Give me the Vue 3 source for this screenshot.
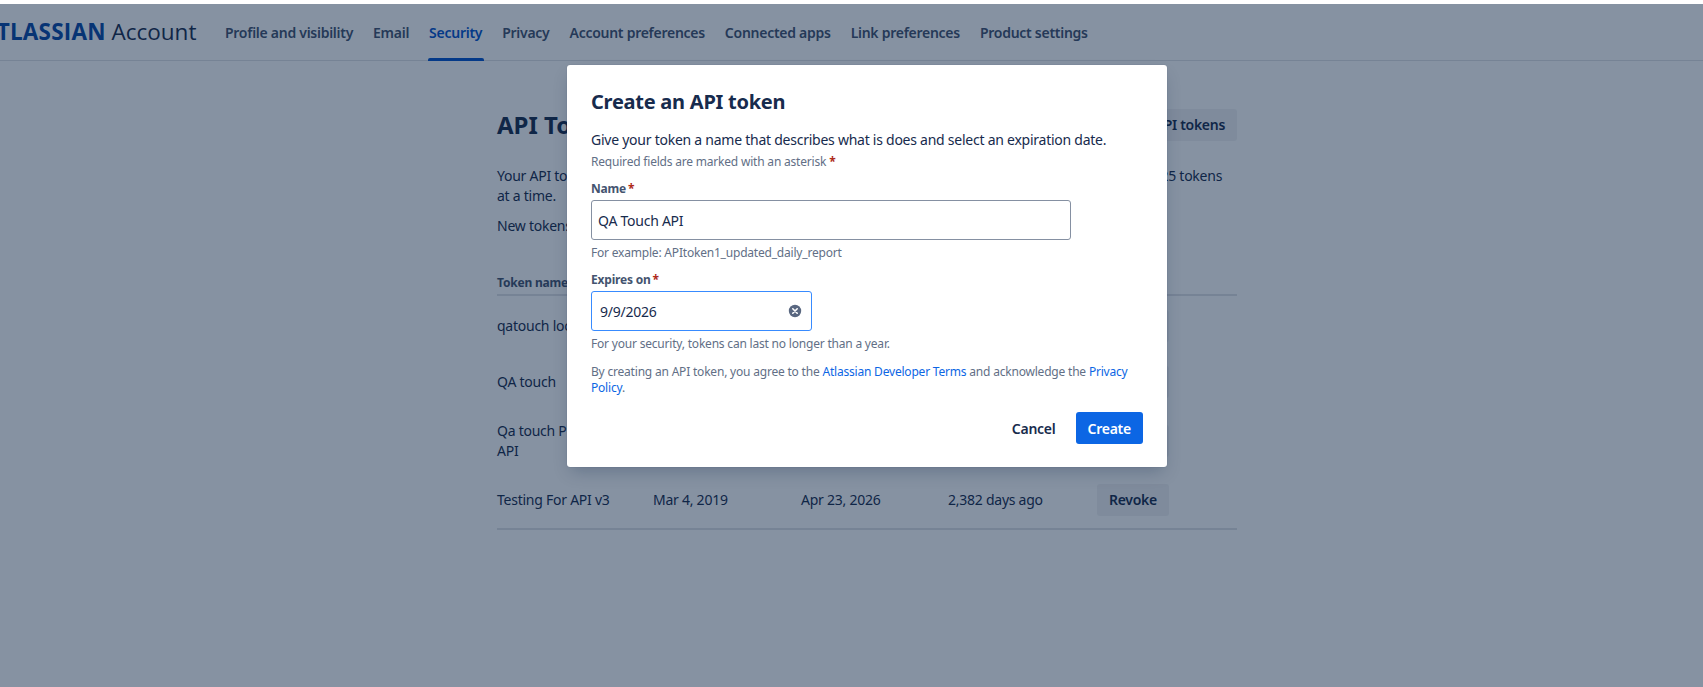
<script setup>
const navItems = [
  "Profile and visibility",
  "Email",
  "Security",
  "Privacy",
  "Account preferences",
  "Connected apps",
  "Link preferences",
  "Product settings",
];

const tokens = [
  { name: "qatouch local", created: "Mar 4, 2019", expires: "Apr 23, 2026", used: "2,382 days ago" },
  { name: "QA touch", created: "Mar 4, 2019", expires: "Apr 23, 2026", used: "2,382 days ago" },
  { name: "Qa touch Production API", created: "Mar 4, 2019", expires: "Apr 23, 2026", used: "2,382 days ago" },
  { name: "Testing For API v3", created: "Mar 4, 2019", expires: "Apr 23, 2026", used: "2,382 days ago" },
];
</script>

<template>
  <div class="page">
    <header class="topbar">
      <div class="logo"><b>ATLASSIAN</b> <span>Account</span></div>
      <nav class="nav">
        <a v-for="item in navItems" :key="item" :class="{ active: item === 'Security' }">{{ item }}</a>
      </nav>
    </header>

    <main class="content">
      <div class="title-row">
        <h1>API Tokens</h1>
        <button class="btn-grey">Create API tokens</button>
      </div>
      <p class="intro">Your API tokens need to be treated just as securely as any other real password. You can only create up to 25 tokens at a time.</p>
      <p class="intro second">New tokens expire after one year by default.</p>

      <div class="table">
        <div class="row head">
          <span>Token name</span><span>Created</span><span>Expires</span><span>Last accessed</span><span></span>
        </div>
        <div class="rows">
          <div v-for="t in tokens" :key="t.name" class="row">
            <span class="name">{{ t.name }}</span>
            <span>{{ t.created }}</span>
            <span>{{ t.expires }}</span>
            <span>{{ t.used }}</span>
            <span><button class="btn-grey">Revoke</button></span>
          </div>
        </div>
      </div>
    </main>

    <div class="overlay">
      <section class="modal">
        <h2>Create an API token</h2>
        <p class="lead">Give your token a name that describes what is does and select an expiration date.</p>
        <p class="small required">Required fields are marked with an asterisk <i>*</i></p>

        <label class="field-label">Name<i>*</i></label>
        <div class="input name-input">QA Touch API</div>
        <p class="small hint">For example: APItoken1_updated_daily_report</p>

        <label class="field-label">Expires on<i>*</i></label>
        <div class="input date-input">
          <span>9/9/2026</span>
          <svg width="16" height="16" viewBox="0 0 16 16">
            <circle cx="8" cy="8" r="6.2" fill="#596780" />
            <path d="M5.8 5.8l4.4 4.4M10.2 5.8l-4.4 4.4" stroke="#fff" stroke-width="1.6" stroke-linecap="round" />
          </svg>
        </div>
        <p class="small hint">For your security, tokens can last no longer than a year.</p>

        <p class="small terms">
          By creating an API token, you agree to the <a>Atlassian Developer Terms</a> and acknowledge the <a>Privacy Policy</a>.
        </p>

        <div class="actions">
          <button class="btn-cancel">Cancel</button>
          <button class="btn-create">Create</button>
        </div>
      </section>
    </div>
  </div>
</template>

<style>
html, body {
  margin: 0;
  background: #fff;
}
</style>

<style scoped>
.page {
  position: relative;
  width: 1703px;
  height: 687px;
  overflow: hidden;
  font-family: "Noto Sans", sans-serif;
  font-size: 14px;
  letter-spacing: -0.25px;
  color: #172b4d;
  background: #fff;
  padding-top: 4px;
  box-sizing: border-box;
}

.topbar {
  display: flex;
  align-items: center;
  height: 56px;
  border-bottom: 1px solid #dfe1e6;
}

.logo {
  margin-left: -19px;
  width: 227px;
  flex: none;
  font-family: "Open Sans", sans-serif;
  font-size: 22.5px;
  letter-spacing: 0;
  white-space: nowrap;
  margin-top: -1px;
}

.logo b {
  color: #0747a6;
  letter-spacing: 0.2px;
}

.logo span {
  font-weight: 400;
}

.nav {
  display: flex;
  gap: 20px;
  height: 100%;
  margin-left: 17px;
}

.nav a {
  position: relative;
  display: flex;
  align-items: center;
  font-weight: 600;
  letter-spacing: -0.27px;
  color: #42526e;
}

.nav a.active {
  color: #0052cc;
}

.nav a.active::after {
  content: "";
  position: absolute;
  left: -1px;
  right: -2px;
  bottom: -1px;
  height: 3px;
  background: #0052cc;
  border-radius: 2px 2px 0 0;
}

.content {
  width: 740px;
  margin-left: 497px;
}

.title-row {
  display: flex;
  justify-content: space-between;
  align-items: center;
  margin-top: 47px;
}

h1 {
  margin: 0;
  font-size: 24px;
  font-weight: 700;
  letter-spacing: 0;
  color: #172b4d;
}

.btn-grey {
  height: 32px;
  padding: 0 12px;
  border: 0;
  border-radius: 3px;
  font: inherit;
  font-weight: 600;
  letter-spacing: -0.3px;
  color: #172b4d;
  background: rgba(9, 30, 66, 0.06);
}

.intro {
  margin: 25px 0 0;
  line-height: 20px;
}

.intro.second {
  margin-top: 10px;
}

.table {
  margin-top: 37px;
  border-bottom: 2px solid #dfe1e6;
}

.rows {
  padding-top: 2px;
}

.row {
  display: grid;
  grid-template-columns: 156px 148px 147px 149px 140px;
  align-items: center;
  min-height: 56px;
  padding: 11px 0;
  box-sizing: border-box;
  line-height: 20px;
}

.name {
  padding-right: 24px;
}

.row.head {
  min-height: 0;
  padding: 0 0 1px;
  font-size: 12px;
  font-weight: 700;
  letter-spacing: -0.2px;
  color: #44546f;
  border-bottom: 2px solid #dfe1e6;
}

.overlay {
  position: absolute;
  left: 0;
  right: 0;
  top: 4px;
  bottom: 0;
  background: rgba(9, 33, 65, 0.49);
}

.modal {
  width: 600px;
  height: 402px;
  margin: 61px 0 0 567px;
  padding: 25px 24px 0;
  box-sizing: border-box;
  background: #fff;
  border-radius: 3px;
  box-shadow: 0 8px 16px -4px rgba(9, 30, 66, 0.25), 0 0 1px rgba(9, 30, 66, 0.31);
}

h2 {
  margin: 0;
  font-size: 20px;
  line-height: 24px;
  font-weight: 700;
  letter-spacing: -0.25px;
  color: #172b4d;
}

.lead {
  margin: 16px 0 0;
  line-height: 20px;
}

.small {
  margin: 0;
  font-size: 12px;
  line-height: 16px;
  letter-spacing: -0.2px;
  color: #626f86;
}

.required {
  margin-top: 4px;
}

i {
  font-style: normal;
  color: #ae2a19;
  font-weight: 700;
}

.field-label {
  display: block;
  margin-top: 11px;
  font-size: 12px;
  line-height: 16px;
  font-weight: 700;
  letter-spacing: -0.2px;
  color: #44546f;
}

.field-label i {
  margin-left: 2px;
}

.input {
  display: flex;
  align-items: center;
  box-sizing: border-box;
  height: 40px;
  margin-top: 3px;
  padding: 0 6px;
  border: 1px solid #8590a2;
  border-radius: 3px;
}

.name-input {
  width: 480px;
}

.date-input {
  width: 221px;
  justify-content: space-between;
  padding: 0 8px;
  border-color: #388bff;
}

.hint {
  margin-top: 5px;
}

.terms {
  margin-top: 12px;
}

.terms a {
  color: #0c66e4;
}

.actions {
  display: flex;
  justify-content: flex-end;
  align-items: center;
  gap: 8px;
  margin-top: 16px;
}

.actions button {
  height: 32px;
  padding: 0 12px;
  border: 0;
  border-radius: 3px;
  font: inherit;
  font-weight: 600;
  letter-spacing: -0.25px;
}

.btn-cancel {
  background: none;
  color: #172b4d;
}

.btn-create {
  background: #0c66e4;
  color: #fff;
}
</style>
